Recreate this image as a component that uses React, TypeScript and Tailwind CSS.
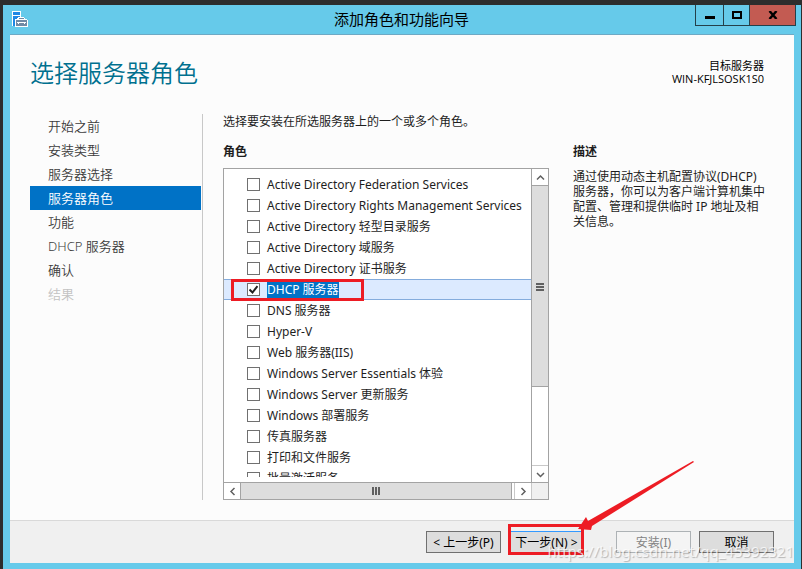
import type {ReactNode} from "react";
import clsx from "clsx";

type Step = {label: string; state?: "active" | "disabled"};

const steps: Step[] = [
	{label: "开始之前"},
	{label: "安装类型"},
	{label: "服务器选择"},
	{label: "服务器角色", state: "active"},
	{label: "功能"},
	{label: "DHCP 服务器"},
	{label: "确认"},
	{label: "结果", state: "disabled"},
];

const roles = [
	"Active Directory Federation Services",
	"Active Directory Rights Management Services",
	"Active Directory 轻型目录服务",
	"Active Directory 域服务",
	"Active Directory 证书服务",
	"DHCP 服务器",
	"DNS 服务器",
	"Hyper-V",
	"Web 服务器(IIS)",
	"Windows Server Essentials 体验",
	"Windows Server 更新服务",
	"Windows 部署服务",
	"传真服务器",
	"打印和文件服务",
	"批量激活服务",
];

const selectedRole = "DHCP 服务器";

function ServerIcon() {
	return (
		<svg width="16" height="16" viewBox="0 0 16 16" shapeRendering="crispEdges">
			<path fill="#fff" d="M0 0h9v6h3v1h1v1h2v1h1v7H3v-1H0z" />
			<path fill="#1e88e5" d="M1 1h7v3H1zM1 5h7v1H6v1H5v1H3v7H1z" />
			<path fill="#708aa5" d="M4 9h11v6H4zM7 7h5v1H7z" />
			<path fill="#fff" d="M5 11h9v1H5zM6 12h1v1H6zM12 12h1v1h-1z" />
		</svg>
	);
}

function Chevron({d}: {d: string}) {
	return (
		<svg width="9" height="9" viewBox="0 0 9 9" fill="none" stroke="#606060" strokeWidth="1.5">
			<path d={d} />
		</svg>
	);
}

function ScrollButton({label, d}: {label: string; d: string}) {
	return (
		<button aria-label={label} className="flex size-4 shrink-0 items-center justify-center bg-white">
			<Chevron d={d} />
		</button>
	);
}

function DialogButton({children, disabled, primary}: {children: ReactNode; disabled?: boolean; primary?: boolean}) {
	return (
		<button
			disabled={disabled}
			className={clsx(
				"block h-[22px] w-[75px] border pt-px text-center text-xs leading-5 whitespace-nowrap",
				disabled && "border-[#adb2b5] bg-[#f4f4f4] text-[#838383]",
				primary && "border-[#3399ff] bg-[#dddddd] text-black",
				!disabled && !primary && "border-[#707070] bg-[#dddddd] text-black"
			)}
		>
			{children}
		</button>
	);
}

function TitleBar() {
	return (
		<header className="flex h-[30px] shrink-0 items-start border-b border-[#6ea9c4]">
			<div className="flex w-[98px] pt-1.5 pl-0.5">
				<ServerIcon />
			</div>
			<h1 className="flex-1 text-center text-[15px] leading-7 text-black">添加角色和功能向导</h1>
			<div className="-mr-0.5 flex h-[21px] border border-t-0 border-[#24404a]">
				<button aria-label="最小化" className="flex w-7 items-center justify-center border-r border-[#24404a]">
					<svg width="10" height="11" viewBox="0 0 10 11">
						<path d="M0 6h10v3H0z" />
					</svg>
				</button>
				<button aria-label="最大化" className="flex w-[26px] items-center justify-center border-r border-[#24404a]">
					<svg width="10" height="8" viewBox="0 0 10 8" fill="none" stroke="#000" strokeWidth="2">
						<path d="M1 1h8v6H1z" />
					</svg>
				</button>
				<button aria-label="关闭" className="flex w-[45px] items-center justify-center bg-[#c35b52]">
					<svg width="10" height="8" viewBox="0 0 10 8" stroke="#000" strokeWidth="2.4">
						<path d="M1.5 0l7 8M8.5 0l-7 8" />
					</svg>
				</button>
			</div>
		</header>
	);
}

function StepList() {
	return (
		<nav className="w-[173px] shrink-0 border-r border-[#c8c8c8] pr-px text-[13px] font-[350]">
			{steps.map((s) => (
				<a
					key={s.label}
					href="#"
					className={clsx(
						"block h-6 pl-[18px] leading-6",
						s.state === "active" && "bg-[#0072c6] text-white",
						s.state === "disabled" && "text-[#c3c3c3]",
						!s.state && "text-[#3c3c3c]"
					)}
				>
					{s.label}
				</a>
			))}
		</nav>
	);
}

function RoleRow({name}: {name: string}) {
	const selected = name === selectedRole;

	return (
		<label
			className={clsx(
				"relative flex h-[21px] items-center gap-[7px] border-y pl-[23px] text-xs whitespace-nowrap text-[#1e1e1e]",
				selected ? "border-[#84acdd] bg-[#dceaff]" : "border-transparent"
			)}
		>
			<input
				type="checkbox"
				defaultChecked={selected}
				className="peer size-[13px] shrink-0 appearance-none border border-[#707070] bg-white"
			/>
			<svg
				className="pointer-events-none absolute left-[25px] hidden peer-checked:block"
				width="9"
				height="9"
				viewBox="0 0 9 9"
				fill="none"
				stroke="#212121"
				strokeWidth="2"
			>
				<path d="M0.5 4.5l3 3L8.5 1" />
			</svg>
			<span className={clsx("leading-4", selected && "bg-[#0072c6] text-white")}>{name}</span>
			{selected && <span className="absolute -top-px left-[7px] h-[22px] w-[133px] border-3 border-[#ed1c24]" />}
		</label>
	);
}

function RoleList() {
	return (
		<div className="flex min-h-0 flex-1 flex-col border border-[#a3a3a3] bg-white">
			<div className="flex min-h-0 flex-1">
				<div className="mb-[5px] min-w-0 flex-1 overflow-hidden pt-[5px]">
					{roles.map((name) => (
						<RoleRow key={name} name={name} />
					))}
				</div>
				<div className="flex w-[17px] flex-col border-l border-[#a3a3a3]">
					<ScrollButton label="向上" d="M1 6.5l3.5-3.5L8 6.5" />
					<div className="h-[202px] shrink-0 border-y border-[#a3a3a3] bg-[#dddddd] pt-[97px]">
						<svg className="mx-auto" width="8" height="8" viewBox="0 0 8 8" fill="#606060">
							<path d="M0 0h8v2H0zM0 3h8v2H0zM0 6h8v2H0z" />
						</svg>
					</div>
					<div className="flex-1 border-b border-[#c8c8c8]" />
					<ScrollButton label="向下" d="M1 3l3.5 3.5L8 3" />
				</div>
			</div>
			<div className="flex h-[17px] shrink-0 border-t border-[#a3a3a3]">
				<ScrollButton label="向左" d="M6.5 1L3 4.5 6.5 8" />
				<div className="flex flex-1 items-center justify-center border-x border-[#a3a3a3] bg-[#dddddd]">
					<svg width="8" height="8" viewBox="0 0 8 8" fill="#606060">
						<path d="M0 0h2v8H0zM3 0h2v8H3zM6 0h2v8H6z" />
					</svg>
				</div>
				<div className="ml-0.5 flex border-x border-[#c8c8c8]">
					<ScrollButton label="向右" d="M2.5 1L6 4.5 2.5 8" />
				</div>
				<div className="w-4 bg-[#f0f0f0]" />
			</div>
		</div>
	);
}

export default function App() {
	return (
		<div className="flex h-screen flex-col bg-[#2d2d2d] pt-[5px] pr-px pl-[3px] font-['Noto_Sans','Noto_Sans_CJK_SC',sans-serif]">
			<div className="flex min-h-0 flex-1 flex-col bg-[#66caea] px-[7px] pb-1.5">
				<TitleBar />
				<main className="flex min-h-0 flex-1 flex-col bg-[#fcfcfc]">
					<div className="flex h-[79px] shrink-0 items-start justify-between pr-[30px] pl-5">
						<h2 className="pt-5 text-2xl leading-9 font-[350] text-[#00708f]">选择服务器角色</h2>
						<div className="pt-6 text-right font-['Open_Sans','Noto_Sans_CJK_SC',sans-serif] text-[11px] leading-[13px] text-black">
							<div>目标服务器</div>
							<div>WIN-KFJLSOSK1S0</div>
						</div>
					</div>
					<div className="flex min-h-0 flex-1 px-5 pb-5">
						<StepList />
						<section className="flex min-w-0 flex-1 flex-col pl-5 text-xs text-[#1e1e1e]">
							<p className="leading-4">选择要安装在所选服务器上的一个或多个角色。</p>
							<h3 className="pt-3.5 pb-2 leading-4 font-bold">角色</h3>
							<RoleList />
						</section>
						<aside className="w-[225px] shrink-0 pt-[30px] pr-2 pl-6 text-xs text-[#1e1e1e]">
							<h3 className="pb-2 leading-4 font-bold">描述</h3>
							<p className="pt-px leading-[15px]">
								通过使用动态主机配置协议(DHCP)服务器，你可以为客户端计算机集中配置、管理和提供临时 IP 地址及相关信息。
							</p>
						</aside>
					</div>
				</main>
				<footer className="relative flex h-[43px] shrink-0 justify-end gap-8 border-t border-[#d9d9d9] bg-[#f0f0f0] pt-2.5 pr-5">
					<div className="flex gap-2">
						<DialogButton>&lt; 上一步(P)</DialogButton>
						<div className="relative">
							<DialogButton primary>下一步(N) &gt;</DialogButton>
							<span className="absolute -top-[7px] -left-px h-[31px] w-[76px] border-3 border-[#ed1c24]" />
						</div>
					</div>
					<div className="flex gap-2">
						<DialogButton disabled>安装(I)</DialogButton>
						<DialogButton>取消</DialogButton>
					</div>
					<svg className="absolute right-[100px] bottom-[31px]" width="116" height="72" viewBox="0 0 116 72" fill="#ed1c24">
						<path d="M115 1L116 2 14 66 13 70 0 69 8 57 10 61z" />
					</svg>
					<span className="absolute right-0 bottom-0 text-[15px] leading-6 whitespace-nowrap text-white/75 [text-shadow:1px_1px_1px_rgba(0,0,0,0.25)]">
						https://blog.csdn.net/qq_45392321
					</span>
				</footer>
			</div>
		</div>
	);
}
